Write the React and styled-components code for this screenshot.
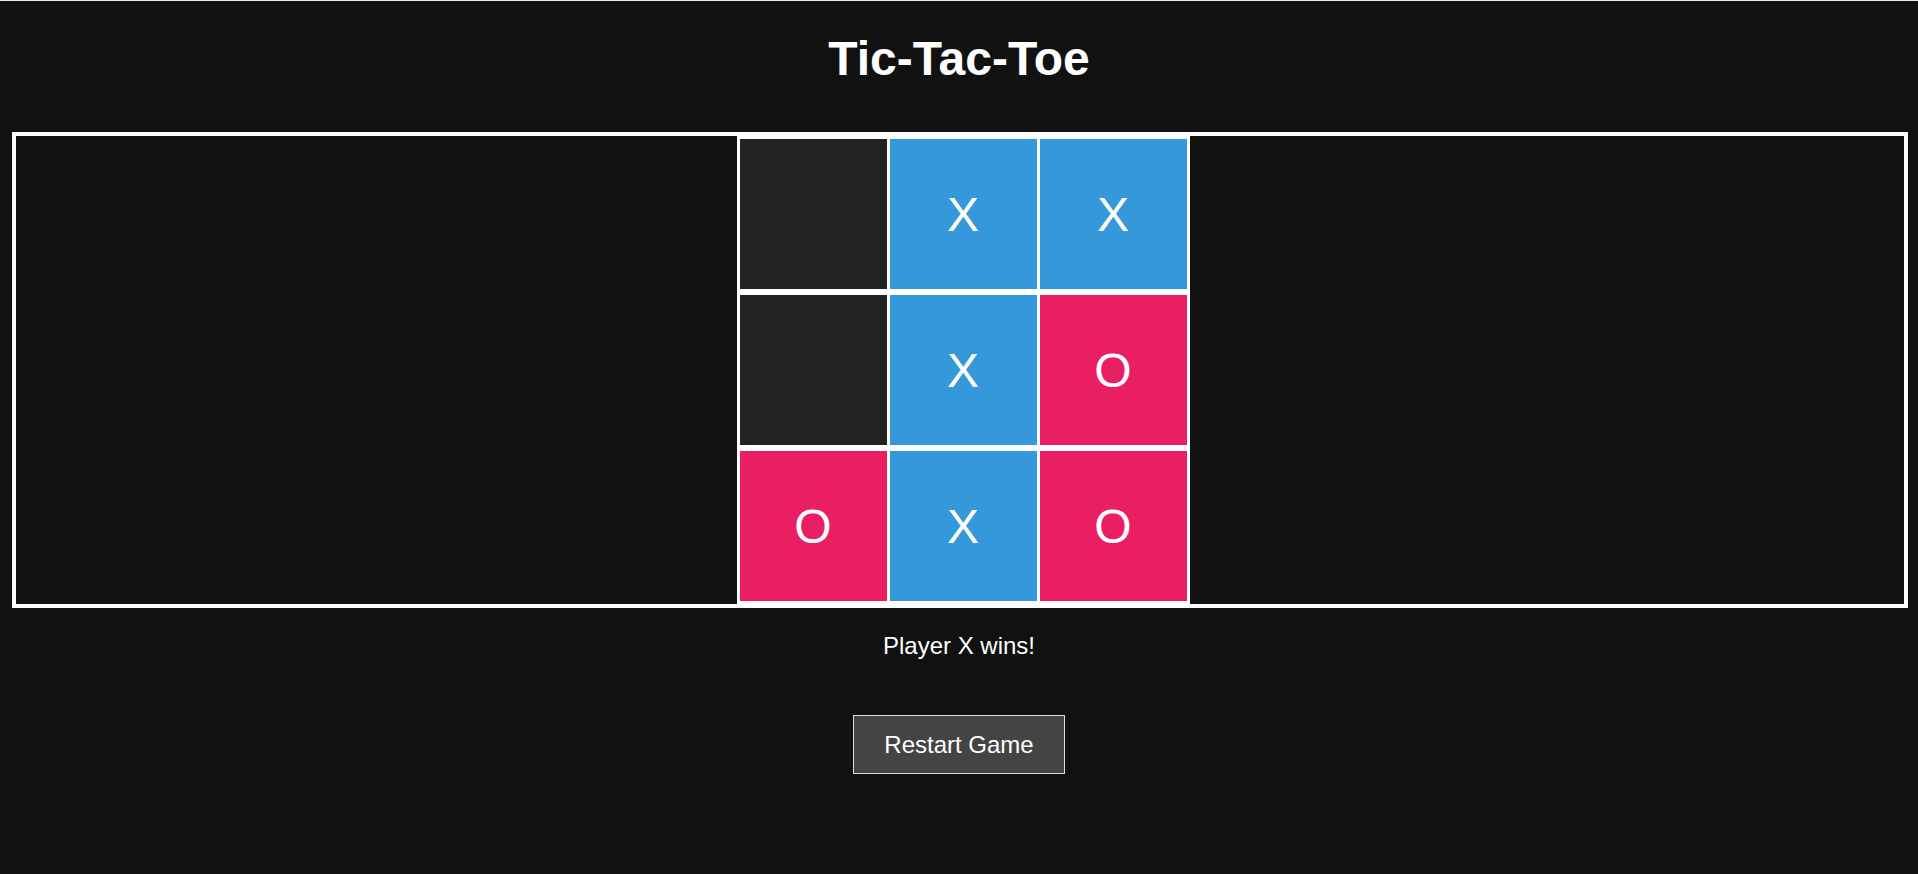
import React, { useState } from "react";
import styled, { createGlobalStyle } from "styled-components";

const GlobalStyle = createGlobalStyle`
  html,
  body {
    margin: 0;
    padding: 0;
    background-color: #111111;
  }

  body {
    border-top: 1px solid #f6e6eb;
    min-height: 873px;
    color: #ffffff;
    font-family: "Liberation Sans", Arial, sans-serif;
  }
`;

const colors = {
  X: "#3498db",
  O: "#e91e63",
  "": "#222222",
};

export const Page = styled.div`
  display: flex;
  flex-direction: column;
  align-items: center;
`;

export const Title = styled.h1`
  margin: 30px 0 46px;
  font-size: 48px;
  line-height: 55px;
  font-weight: bold;
`;

export const BoardFrame = styled.div`
  align-self: stretch;
  margin: 0 10px 0 12px;
  padding-left: 6px;
  border: 4px solid #ffffff;
  display: flex;
  justify-content: center;
  background-color: #111111;
`;

export const Board = styled.div`
  display: grid;
  grid-template-columns: repeat(3, 147px);
  grid-template-rows: repeat(3, 150px);
  column-gap: 3px;
  row-gap: 6px;
  padding: 3px;
  background-color: #ffffff;
`;

export const Cell = styled.div`
  display: flex;
  justify-content: center;
  align-items: center;
  background-color: ${(props) => colors[props.value]};
  color: #ffffff;
  font-size: 48px;
  cursor: ${(props) => (props.value ? "default" : "pointer")};
`;

export const Status = styled.p`
  margin: 24px 0 0;
  font-size: 24px;
  line-height: 28px;
`;

export const RestartButton = styled.button`
  margin-top: 55px;
  padding: 15px 30px;
  border: 1px solid #dddddd;
  background-color: #444444;
  color: #ffffff;
  font-family: "Liberation Sans", Arial, sans-serif;
  font-size: 24px;
  line-height: 27px;
  cursor: pointer;
`;

const START = ["", "X", "X", "", "X", "O", "O", "X", "O"];

const App = () => {
  const [cells, setCells] = useState(START);

  return (
    <>
      <GlobalStyle />
      <Page>
        <Title>Tic-Tac-Toe</Title>
        <BoardFrame>
          <Board>
            {cells.map((value, i) => (
              <Cell key={i} value={value}>
                {value}
              </Cell>
            ))}
          </Board>
        </BoardFrame>
        <Status>Player X wins!</Status>
        <RestartButton onClick={() => setCells(Array(9).fill(""))}>
          Restart Game
        </RestartButton>
      </Page>
    </>
  );
};

export default App;
